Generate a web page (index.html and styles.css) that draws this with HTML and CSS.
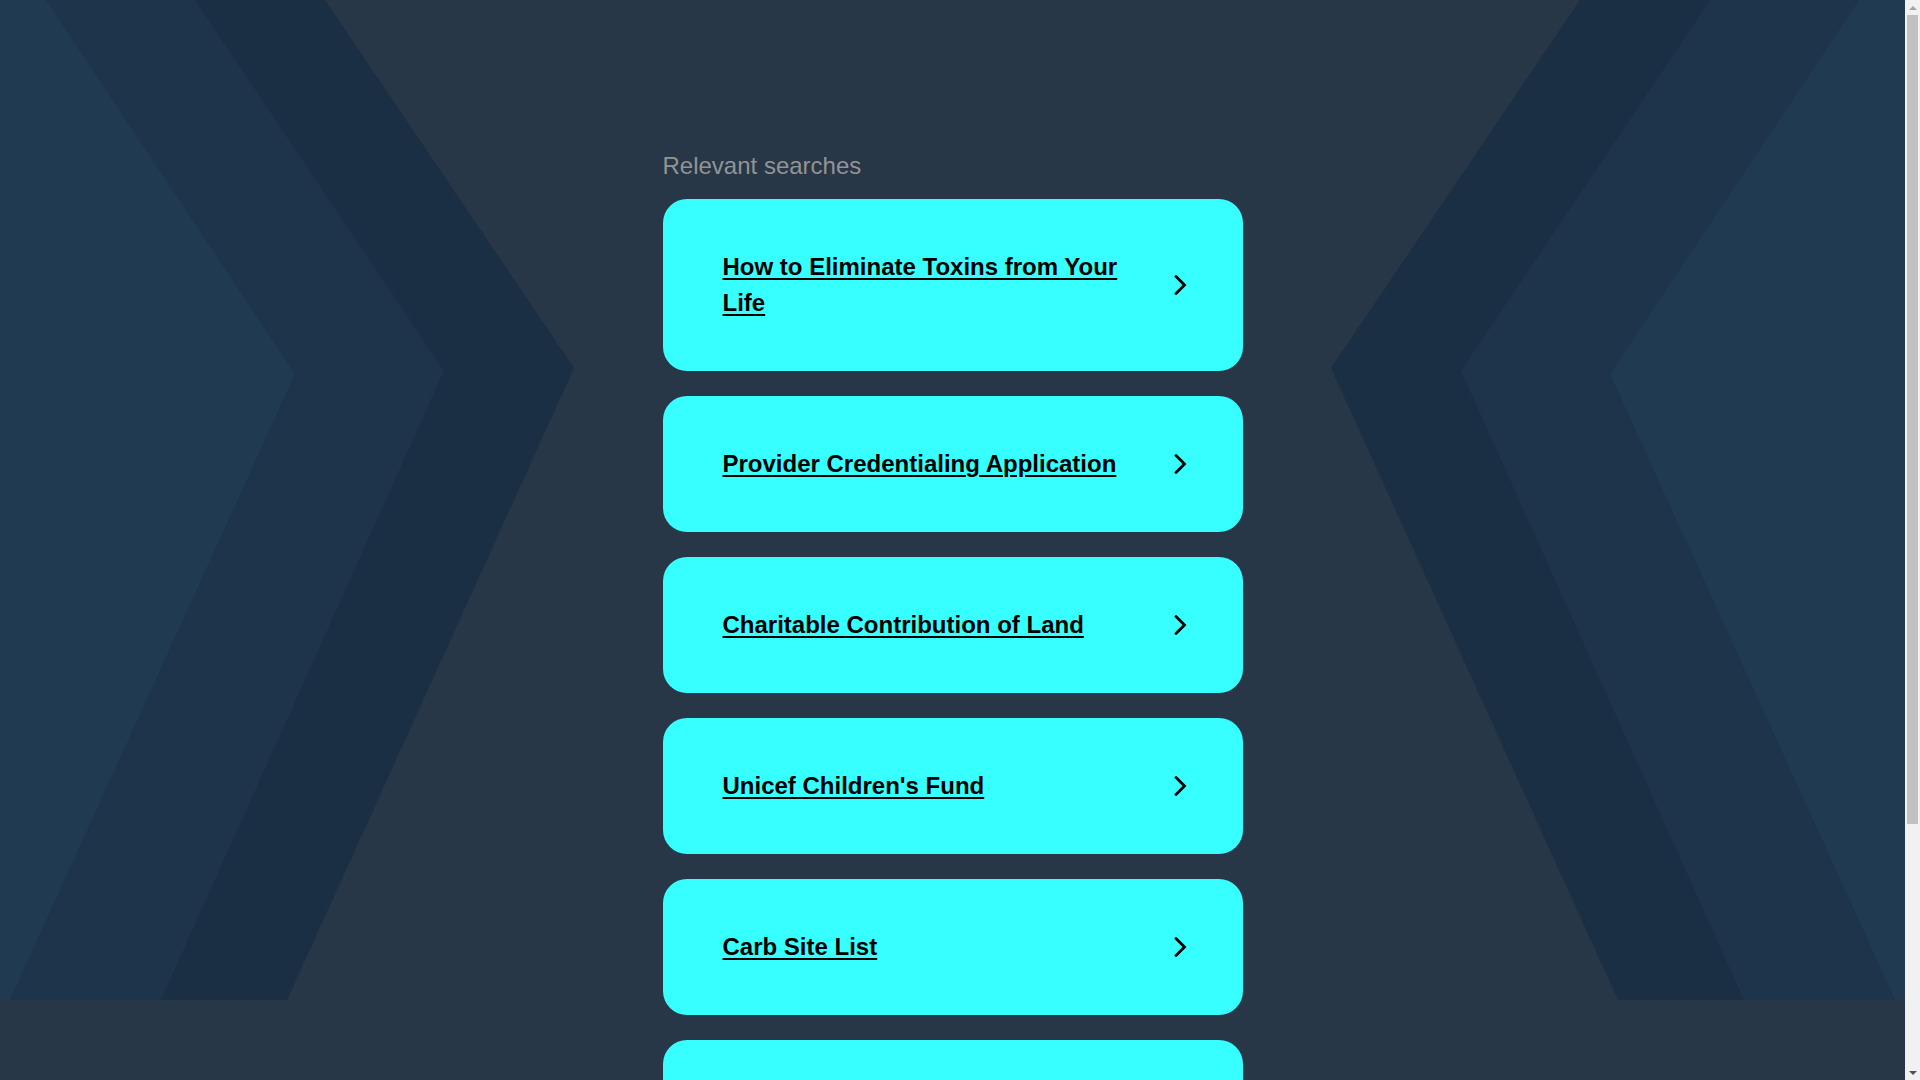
FILE: index.html
```html
<!DOCTYPE html>
<html lang="en">
<head>
<meta charset="utf-8">
<title>Relevant searches</title>
<link rel="stylesheet" href="styles.css">
</head>
<body>
<div class="viewport">
  <div class="backdrop" aria-hidden="true">
    <svg class="backdrop-svg" viewBox="0 0 1905 1000" preserveAspectRatio="none">
      <g>
        <polygon points="0,0 325,0 574,368 287,1000 0,1000" fill="#1a2f44"/>
        <polygon points="0,0 195,0 444,371 161,1000 0,1000" fill="#1d344a"/>
        <polygon points="0,0 46,0 295,374 10,1000 0,1000" fill="#203a51"/>
      </g>
      <g transform="translate(1905,0) scale(-1,1)">
        <polygon points="0,0 325,0 574,368 287,1000 0,1000" fill="#1a2f44"/>
        <polygon points="0,0 195,0 444,371 161,1000 0,1000" fill="#1d344a"/>
        <polygon points="0,0 46,0 295,374 10,1000 0,1000" fill="#203a51"/>
      </g>
    </svg>
  </div>
  <main class="page">
    <h2 class="heading">Relevant searches</h2>
    <ul class="list">
      <li class="card"><a class="card-link" href="#">How to Eliminate Toxins from Your Life</a><svg class="chev" viewBox="0 0 13 20"><path d="M2 1.5 L10.5 10 L2 18.5"/></svg></li>
      <li class="card"><a class="card-link" href="#">Provider Credentialing Application</a><svg class="chev" viewBox="0 0 13 20"><path d="M2 1.5 L10.5 10 L2 18.5"/></svg></li>
      <li class="card"><a class="card-link" href="#">Charitable Contribution of Land</a><svg class="chev" viewBox="0 0 13 20"><path d="M2 1.5 L10.5 10 L2 18.5"/></svg></li>
      <li class="card"><a class="card-link" href="#">Unicef Children's Fund</a><svg class="chev" viewBox="0 0 13 20"><path d="M2 1.5 L10.5 10 L2 18.5"/></svg></li>
      <li class="card"><a class="card-link" href="#">Carb Site List</a><svg class="chev" viewBox="0 0 13 20"><path d="M2 1.5 L10.5 10 L2 18.5"/></svg></li>
      <li class="card"><a class="card-link" href="#">Online Donation Platforms</a><svg class="chev" viewBox="0 0 13 20"><path d="M2 1.5 L10.5 10 L2 18.5"/></svg></li>
      <li class="card"><a class="card-link" href="#">Charity Car Donation</a><svg class="chev" viewBox="0 0 13 20"><path d="M2 1.5 L10.5 10 L2 18.5"/></svg></li>
    </ul>
  </main>
</div>
<div class="scrollbar" aria-hidden="true">
  <div class="sb-up"></div>
  <div class="sb-thumb"></div>
  <div class="sb-down"></div>
</div>
</body>
</html>
```

FILE: styles.css
```css
html, body {
  margin: 0;
  padding: 0;
}

body {
  background: #273747;
  font-family: "Liberation Sans", Arial, sans-serif;
}

.viewport {
  position: relative;
  width: calc(100% - 15px);
  min-height: 1402px;
}

.backdrop {
  position: absolute;
  top: 0;
  left: 0;
  right: 0;
  height: 1000px;
  z-index: 0;
  overflow: hidden;
}

.backdrop-svg {
  display: block;
  width: 100%;
  height: 1000px;
}

.page {
  position: relative;
  z-index: 1;
  width: 580px;
  margin: 0 auto;
  padding: 148px 0 40px;
}

.heading {
  margin: 0 0 15px;
  font-size: 24px;
  line-height: 36px;
  font-weight: normal;
  color: #939393;
}

.list {
  list-style: none;
  margin: 0;
  padding: 0;
  display: flex;
  flex-direction: column;
  gap: 25px;
}

.card {
  background: #37ffff;
  border-radius: 24px;
  padding: 50px 56px 50px 60px;
  display: flex;
  align-items: center;
  gap: 31px;
}

.card-link {
  flex: 1;
  color: #000;
  font-size: 24px;
  line-height: 36px;
  font-weight: bold;
  text-decoration: underline;
  text-decoration-thickness: 2px;
  text-underline-offset: 3px;
}

.chev {
  flex-shrink: 0;
  width: 13px;
  height: 20px;
}

.chev path {
  fill: none;
  stroke: #000;
  stroke-width: 2.8;
  stroke-linecap: round;
  stroke-linejoin: miter;
}

/* imitation of the browser's classic scrollbar seen in the screenshot */
.scrollbar {
  position: fixed;
  top: 0;
  right: 0;
  width: 15px;
  height: 100vh;
  background: #f1f1f1;
  display: flex;
  flex-direction: column;
  align-items: center;
  z-index: 5;
}

.sb-up,
.sb-down {
  width: 15px;
  height: 15px;
  flex-shrink: 0;
  display: flex;
  align-items: center;
  justify-content: center;
}

.sb-up::before {
  content: "";
  border-left: 4px solid transparent;
  border-right: 4px solid transparent;
  border-bottom: 4px solid #a3a3a3;
}

.sb-down::before {
  content: "";
  border-left: 4px solid transparent;
  border-right: 4px solid transparent;
  border-top: 4px solid #505050;
}

.sb-thumb {
  width: 11px;
  height: 809px;
  background: #c1c1c1;
  flex-shrink: 0;
}

.sb-down {
  margin-top: auto;
}
```
